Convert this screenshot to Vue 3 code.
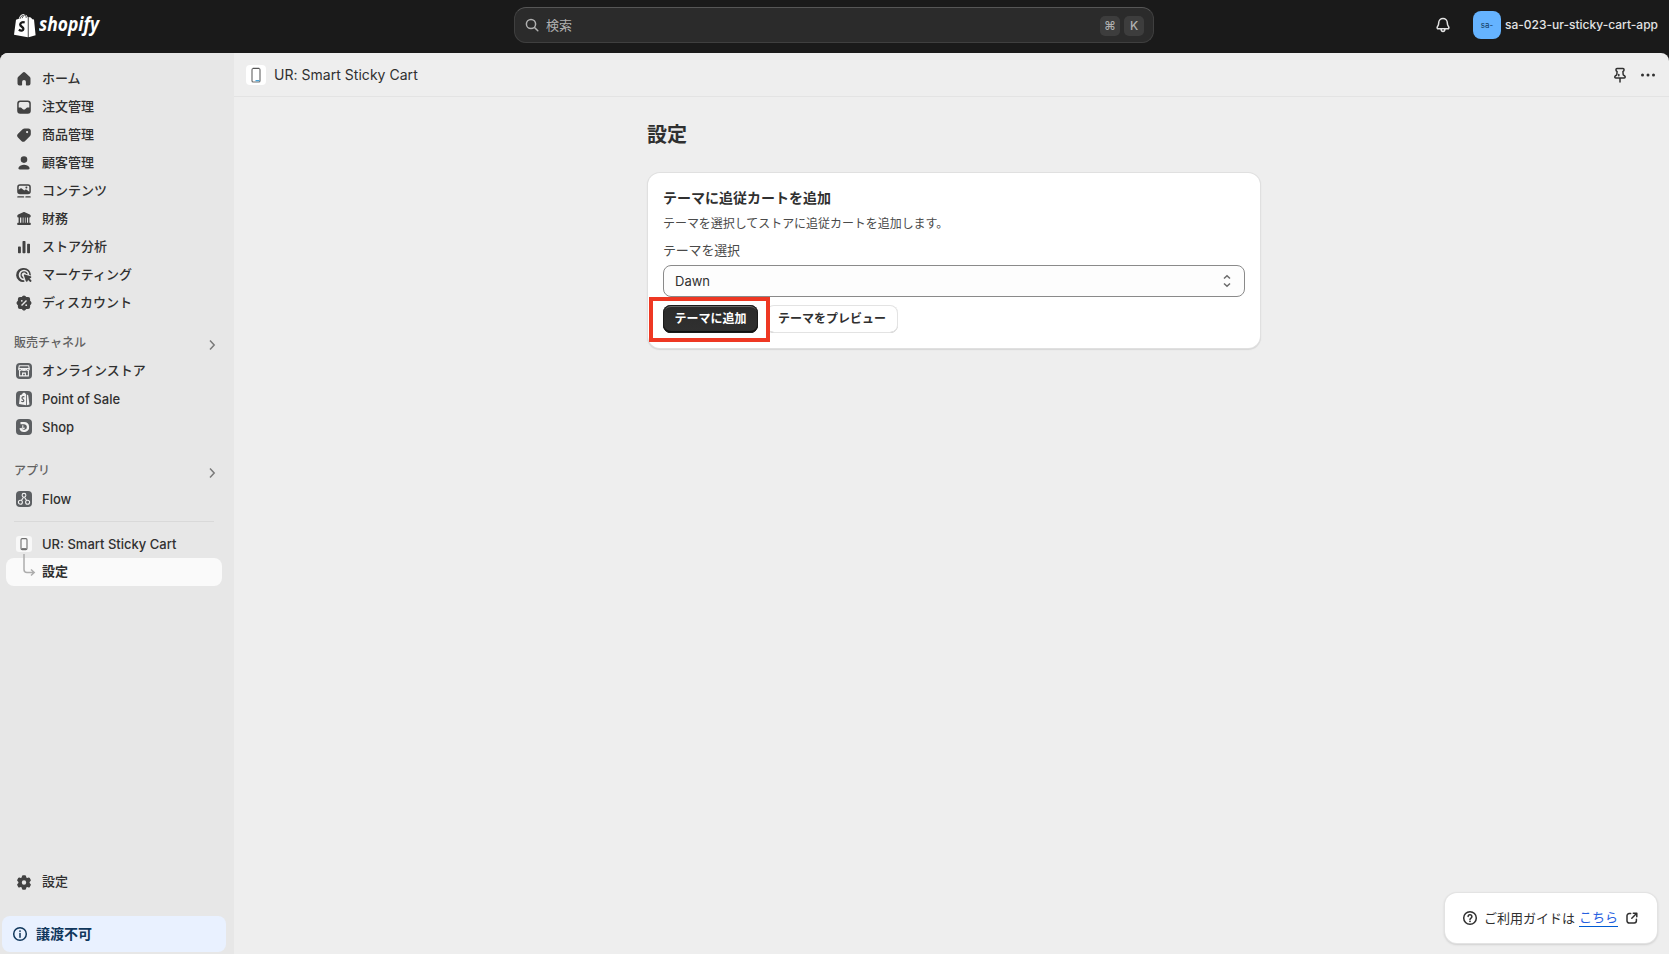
<template>
  <div class="admin">
    <header class="topbar">
      <div class="logo">
        <svg class="logo-bag" viewBox="0 0 22 25" aria-hidden="true">
          <path
            fill="#fff"
            d="M14.6 4.1 16.8 4.4 18.4 6.2 20 6.4 21.6 22.2 14.6 24.2z M13.8 4 13.8 24.3 0 21.8 2 6.7 4.8 5.8C5.4 3.4 7.1 1.1 9.2 1c.7 0 1.2.3 1.5.8C12.2 1.7 13.1 2.6 13.5 4z"
          />
          <path d="M6 5.8C6.6 3.8 8 2.2 9.3 2.2M8.2 5.2c.4-1.5 1.2-2.8 2.5-3.1M11 2c.9.4 1.2 1.5 1.2 2.8" stroke="#1a1a1a" stroke-width=".8" fill="none" />
          <path d="M10.7 9.5C8.4 8.600 6.300 9.600 6.200 11.500c-.1 2.300 3.300 2.300 3.200 4.500-.1 1.900-2.300 2.200-4.600.8" stroke="#1a1a1a" stroke-width="2.300" fill="none" />
        </svg>
        <svg class="logo-word" viewBox="0 0 70 36">
          <text x="0" y="24" textLength="60" lengthAdjust="spacingAndGlyphs">shopify</text>
        </svg>
      </div>

      <div class="search">
        <svg class="icon" viewBox="0 0 20 20">
          <circle cx="9" cy="9" r="4.600" class="line" />
          <path d="m12.500 12.500 3.300 3.300" class="line" />
        </svg>
        <span class="search-text">検索</span>
        <kbd>⌘</kbd>
        <kbd>K</kbd>
      </div>

      <div class="account">
        <svg class="icon bell" viewBox="0 0 20 20">
          <path
            class="line"
            d="M10 3.500a4.300 4.300 0 0 0-4.300 4.300c0 2.400-.6 3.200-1.300 4-.6.800-.2 2 .9 2h9.400c1.100 0 1.500-1.200.9-2-.7-.8-1.300-1.600-1.300-4A4.300 4.300 0 0 0 10 3.500zM8 14.200c.2 1.600 1 2.200 2 2.200s1.800-.6 2-2.200"
          />
        </svg>
        <span class="avatar">sa-</span>
        <span class="store-name">sa-023-ur-sticky-cart-app</span>
      </div>
    </header>

    <div class="frame">
      <nav class="sidebar">
        <a v-for="item in mainNav" :key="item.label" class="nav-item">
          <svg class="icon" viewBox="0 0 20 20">
            <path :d="icons[item.icon]" fill-rule="evenodd" />
          </svg>
          <span class="ja">{{ item.label }}</span>
        </a>

        <div class="nav-heading">
          <span>販売チャネル</span>
          <svg viewBox="0 0 8 12"><path d="m2 1.500 4.200 4.500L2 10.500" /></svg>
        </div>
        <a class="nav-item">
          <svg class="icon" viewBox="0 0 20 20">
            <rect x="2" y="2" width="16" height="16" rx="4" fill="#5c5f62" />
            <path d="M5.300 4.800h9.400l.7 3.400a1.600 1.600 0 0 1-3.100 0 1.600 1.600 0 0 1-3.100 0h1.600a1.600 1.600 0 0 1-3.100 0 1.600 1.600 0 0 1-3.100 0zM5.600 9.800v5.100h8.800V9.800M8.600 15v-2.900h2.800V15" class="tile-line" />
            <path d="M5 7.500h10" class="tile-line" />
          </svg>
          <span class="ja">オンラインストア</span>
        </a>
        <a class="nav-item">
          <svg class="icon" viewBox="0 0 20 20">
            <rect x="2" y="2" width="16" height="16" rx="4" fill="#5c5f62" />
            <path d="m6 6.200 1.900-.6c.5-1.300 1.300-1.900 2.200-1.900.8 0 1.400.6 1.600 1.400l.4.1v11L5 15zM12.900 5.400l1.300.9 1.300 9.100-2.600.8z" fill="#f1f1f1" />
            <path d="M10.400 7.900c-1.500-.5-2.400.1-2.400 1.100 0 1.400 1.900 1.300 1.800 2.700-.1 1.100-1.300 1.300-2.500.6" stroke="#5c5f62" stroke-width="1.200" fill="none" />
          </svg>
          <span>Point of Sale</span>
        </a>
        <a class="nav-item">
          <svg class="icon" viewBox="0 0 20 20">
            <rect x="2" y="2" width="16" height="16" rx="4" fill="#5c5f62" />
            <path d="M6.500 6.100h3.700a3.900 3.900 0 1 1-3.800 5.100" stroke="#f1f1f1" stroke-width="2.200" fill="none" />
            <path d="M8.800 8.200v3.500l2-.7" stroke="#f1f1f1" stroke-width="1.100" fill="none" />
          </svg>
          <span>Shop</span>
        </a>

        <div class="nav-heading apps">
          <span>アプリ</span>
          <svg viewBox="0 0 8 12"><path d="m2 1.500 4.200 4.500L2 10.500" /></svg>
        </div>
        <a class="nav-item">
          <svg class="icon" viewBox="0 0 20 20">
            <rect x="2" y="2" width="16" height="16" rx="4" fill="#5c5f62" />
            <g class="tile-line">
              <circle cx="10" cy="6.300" r="1.900" />
              <circle cx="6.400" cy="13.300" r="2" />
              <circle cx="13.600" cy="13.300" r="2" />
              <path d="M9.500 8.200 7.500 11.400M10.500 8.200l2 3.200" />
            </g>
          </svg>
          <span>Flow</span>
        </a>

        <hr class="nav-divider" />

        <a class="nav-item">
          <svg class="icon" viewBox="0 0 20 20">
            <rect x="2" y="2" width="16" height="16" rx="3" fill="#f8f8f8" />
            <rect x="7" y="4.600" width="6" height="11" rx="1.200" fill="none" stroke="#6f6f6f" stroke-width="1.100" />
            <path d="M7.500 14.600h5" stroke="#6f6f6f" />
          </svg>
          <span>UR: Smart Sticky Cart</span>
        </a>
        <a class="nav-item sub active">
          <svg class="branch" viewBox="0 0 14 26">
            <path d="M2 0v15.500a3 3 0 0 0 3 3h7M9 15.500l3.200 3L9 21.500" />
          </svg>
          <span class="ja">設定</span>
        </a>

        <div class="sidebar-foot">
          <a class="nav-item">
            <svg class="icon" viewBox="0 0 20 20">
              <path :d="icons.gear" fill-rule="evenodd" />
            </svg>
            <span class="ja">設定</span>
          </a>
          <div class="notice">
            <svg class="icon" viewBox="0 0 20 20">
              <circle cx="10" cy="10" r="6.300" class="line" />
              <path d="M10 9.600v3.600" class="line" />
              <circle cx="10" cy="7.100" r=".9" />
            </svg>
            <span class="ja">譲渡不可</span>
          </div>
        </div>
      </nav>

      <main class="main">
        <div class="app-bar">
          <svg class="app-logo" viewBox="0 0 20 20">
            <rect width="20" height="20" rx="4" fill="#fff" />
            <rect x="6" y="3.500" width="8" height="13.500" rx="1.300" fill="none" stroke="#6f6f6f" stroke-width="1.200" />
            <path d="M6.800 3.400h6.400" stroke="#555" stroke-width="1.400" />
            <path d="M9.500 15.600h4" stroke="#4aa3d8" stroke-width="1.200" />
          </svg>
          <span class="app-name">UR: Smart Sticky Cart</span>
          <svg class="icon pin" viewBox="0 0 20 20">
            <path
              class="line"
              d="M7 3.500h6c.6 0 1 .4 1 1v.6c0 .5-.3 1-.8 1.200l-.3.200.3 3.300 1.400 1c.4.300.6.700.6 1.200 0 .5-.4.900-.9.900H5.700a.9.900 0 0 1-.9-.9c0-.5.200-.9.600-1.200l1.400-1 .3-3.300-.3-.2A1.300 1.300 0 0 1 6 5.100v-.6c0-.6.400-1 1-1zM10 13v4M8.800 9.500v1.200"
            />
          </svg>
          <svg class="icon" viewBox="0 0 20 20">
            <circle cx="4.500" cy="10" r="1.500" />
            <circle cx="10" cy="10" r="1.500" />
            <circle cx="15.500" cy="10" r="1.500" />
          </svg>
        </div>

        <div class="page">
          <h1>設定</h1>
          <section class="card">
            <h2>テーマに追従カートを追加</h2>
            <p>テーマを選択してストアに追従カートを追加します。</p>
            <label>テーマを選択</label>
            <div class="select">
              <span>Dawn</span>
              <svg viewBox="0 0 10 14"><path d="M2 4.500 5 1.700l3 2.800M2 9.500l3 2.800 3-2.800" /></svg>
            </div>
            <div class="actions">
              <div class="highlight">
                <button class="btn primary">テーマに追加</button>
              </div>
              <button class="btn">テーマをプレビュー</button>
            </div>
          </section>
        </div>

        <aside class="guide">
          <svg class="icon" viewBox="0 0 20 20">
            <circle cx="10" cy="10" r="6.300" class="line" />
            <path d="M8.100 8.600a1.900 1.900 0 1 1 2.900 1.600c-.6.400-1 .6-1 1.200" class="line" />
            <circle cx="10" cy="13.300" r=".9" />
          </svg>
          <span class="guide-text">ご利用ガイドは</span>
          <a>こちら</a>
          <svg class="icon external" viewBox="0 0 20 20">
            <path d="M8.700 5.600H7.200a2.200 2.200 0 0 0-2.200 2.200v5a2.200 2.200 0 0 0 2.200 2.200h5a2.200 2.200 0 0 0 2.200-2.200v-1.500M11.300 5.200h3.500v3.500M14.500 5.500l-4.700 4.700" class="line" />
          </svg>
        </aside>
      </main>
    </div>
  </div>
</template>

<script setup>
const mainNav = [
  { label: 'ホーム', icon: 'home' },
  { label: '注文管理', icon: 'inbox' },
  { label: '商品管理', icon: 'tag' },
  { label: '顧客管理', icon: 'person' },
  { label: 'コンテンツ', icon: 'content' },
  { label: '財務', icon: 'bank' },
  { label: 'ストア分析', icon: 'chart' },
  { label: 'マーケティング', icon: 'target' },
  { label: 'ディスカウント', icon: 'discount' },
]

const icons = {
  home: 'M8.600 3.700a2 2 0 0 1 2.800 0l4.300 4.100c.5.500.8 1.100.8 1.800v4.900a2 2 0 0 1-2 2h-1.800a.8.800 0 0 1-.8-.8v-2.900a1.900 1.900 0 0 0-3.800 0v2.900a.8.800 0 0 1-.8.800H5.500a2 2 0 0 1-2-2V9.600c0-.7.300-1.300.8-1.800z',
  inbox: 'M6.200 3.500h7.600a3 3 0 0 1 3 3v7.200a3 3 0 0 1-3 3H6.200a3 3 0 0 1-3-3V6.500a3 3 0 0 1 3-3zM6.400 5a1.700 1.700 0 0 0-1.700 1.700v3.800h2c.4 0 .7.200.9.500.5.900 1.400 1.500 2.400 1.500s1.900-.6 2.400-1.500c.2-.3.500-.5.900-.5h2V6.700A1.700 1.700 0 0 0 13.600 5z',
  tag: 'M10.700 3.500h3.600A2.500 2.500 0 0 1 16.800 6v3.200c0 .8-.3 1.500-.9 2l-4.800 4.700a2.600 2.600 0 0 1-3.700 0L4 12.500a2.600 2.600 0 0 1 0-3.700l4.600-4.500a3 3 0 0 1 2.100-.8zM13.100 8.200a1.100 1.100 0 1 0 0-2.200 1.100 1.100 0 0 0 0 2.200z',
  person: 'M10 3.300a3.300 3.300 0 1 1 0 6.600 3.300 3.300 0 0 1 0-6.600zM4.600 14.500c1-1.800 3-2.800 5.400-2.800s4.400 1 5.400 2.800c.5 1-.1 2-1.200 2H5.800c-1.100 0-1.700-1-1.200-2z',
  content: 'M6 3.200h8a2.800 2.800 0 0 1 2.800 2.800v4.500a2.800 2.800 0 0 1-2.800 2.800H6a2.800 2.800 0 0 1-2.800-2.800V6A2.800 2.800 0 0 1 6 3.200zM6 4.700A1.300 1.300 0 0 0 4.700 6v2.700l1.700-1.200c.4-.3.900-.3 1.300 0l2.600 2.100 1-.8c.4-.3.900-.3 1.300 0l2.700 2V6A1.300 1.300 0 0 0 14 4.700zM12.400 5.500a1 1 0 1 1 0 2 1 1 0 0 1 0-2zM3.900 15.200H9.500a.7.700 0 0 1 0 1.400H3.900a.7.700 0 0 1 0-1.400zM12 15.200h4.100a.7.700 0 0 1 0 1.400H12a.7.700 0 0 1 0-1.400z',
  bank: 'M9.200 3.200c.5-.3 1.100-.3 1.600 0l5 2.300c.6.300 1 .9 1 1.500 0 .8-.6 1.500-1.400 1.500v5.300h.7c.4 0 .7.300.7.700v.8c0 .4-.3.700-.7.700H3.900a.7.700 0 0 1-.7-.7v-.8c0-.4.300-.7.700-.7h.7V8.500A1.400 1.400 0 0 1 3.200 7c0-.6.400-1.200 1-1.500zM6 8.500v5.300h1.300V8.500zM8.700 8.500v5.300h.8V8.500zM10.900 8.500v5.300h.7V8.500zM13 8.500v5.300h1.100V8.500z',
  chart: 'M9.200 4h1.600a.7.700 0 0 1 .7.700v10.900a.7.700 0 0 1-.7.700H9.200a.7.700 0 0 1-.7-.7V4.700a.7.700 0 0 1 .7-.7zM4.700 9.500h1.500a.7.700 0 0 1 .7.700v5.400a.7.700 0 0 1-.7.700H4.700a.7.700 0 0 1-.7-.7v-5.400a.7.700 0 0 1 .7-.7zM13.800 6.800h1.500a.7.700 0 0 1 .7.700v8.100a.7.700 0 0 1-.7.700h-1.500a.7.700 0 0 1-.7-.7V7.500a.7.700 0 0 1 .7-.7z',
  target: 'M10 3a7 7 0 0 1 6.900 6.900l-.1.600-1.500-.4A5.300 5.300 0 1 0 10.100 15.300l.4 1.500A7 7 0 1 1 10 3zM10 6.200a3.800 3.800 0 0 1 3.700 3.100l-1.600-.3a2.300 2.300 0 1 0-3 3l.4 1.700A3.800 3.800 0 0 1 10 6.200zM10.700 9.600l5.900 1.600c.9.200 1 1.300.2 1.700l-1.300.6 1.800 1.800a1 1 0 0 1-1.400 1.400l-1.800-1.800-.6 1.300c-.4.800-1.500.7-1.700-.2l-1.900-5.600c-.2-.5.300-1 .8-.8z',
  discount: 'M8.600 3.100a2 2 0 0 1 2.800 0l.8.800h1.900a2 2 0 0 1 2 2v1.900l.8.800a2 2 0 0 1 0 2.800l-.8.800v1.900a2 2 0 0 1-2 2h-1.900l-.8.800a2 2 0 0 1-2.800 0l-.8-.8H5.900a2 2 0 0 1-2-2v-1.900l-.8-.8a2 2 0 0 1 0-2.800l.8-.8V5.900a2 2 0 0 1 2-2h1.900zM12 7l1 1-5 5-1-1zM7.800 8.700a.9.900 0 1 0 0-1.800.9.900 0 0 0 0 1.800zM12.200 13.100a.9.900 0 1 0 0-1.800.9.900 0 0 0 0 1.800z',
  gear: 'M9 3.300h2c.5 0 .9.300 1 .8l.3 1.300 1 .6 1.300-.4c.5-.1 1 .1 1.200.5l.9 1.600c.3.400.2 1-.2 1.300l-.9.900v1.200l.9.900c.4.300.5.900.2 1.300l-.9 1.600c-.2.400-.7.600-1.200.5l-1.300-.4-1 .6-.3 1.300c-.1.500-.5.800-1 .8H9c-.5 0-.9-.3-1-.8l-.3-1.300-1-.6-1.300.4c-.5.100-1-.1-1.200-.5l-.9-1.600c-.3-.4-.2-1 .2-1.300l.9-.9V9.900L3.500 9c-.4-.3-.5-.9-.2-1.300l.9-1.600c.2-.4.7-.6 1.200-.5l1.300.4 1-.6L8 4.100c.1-.5.500-.8 1-.8zM10 12.700a2.200 2.200 0 1 0 0-4.400 2.200 2.200 0 0 0 0 4.400z',
}
</script>

<style>
body {
  background: #1a1a1a;
}
</style>

<style scoped>
* {
  box-sizing: border-box;
}

.admin {
  display: flex;
  flex-direction: column;
  height: 100vh;
  overflow: hidden;
  background: #1a1a1a;
  color: #303030;
  font-family: Inter, "Noto Sans CJK JP", sans-serif;
  font-size: 13px;
  line-height: 20px;
}

.icon {
  flex: none;
  width: 20px;
  height: 20px;
  fill: currentColor;
}

.line {
  fill: none;
  stroke: currentColor;
  stroke-width: 1.5;
  stroke-linecap: round;
  stroke-linejoin: round;
}

.tile-line {
  fill: none;
  stroke: #f1f1f1;
  stroke-width: 1.1;
}

/* Japanese glyphs sit slightly low in the line box */
.ja {
  padding-bottom: 1px;
  line-height: 19px;
}

.topbar {
  display: grid;
  grid-template-columns: 514px 640px 1fr;
  flex: none;
  height: 53px;
  padding-bottom: 3px;
  align-items: center;
}

.logo {
  display: flex;
  align-items: center;
  gap: 3px;
  padding-left: 14px;
}

.logo-bag {
  width: 22px;
  height: 25px;
}

.logo-word {
  width: 70px;
  height: 36px;
  fill: #fff;
  font: italic 700 20px/26px "Open Sans", sans-serif;
}

.search {
  display: flex;
  align-items: center;
  height: 36px;
  padding: 0 9px 0 7px;
  border: 1px solid #3f3f3f;
  border-top-color: #565656;
  border-radius: 12px;
  background: #2b2b2b;
  color: #b0b0b0;
}

.search-text {
  flex: 1;
  margin-left: 4px;
}

kbd {
  width: 20px;
  height: 20px;
  margin: 1px 0 0 4px;
  border-radius: 5px;
  background: #3d3d3d;
  font: 500 12px/20px Inter, sans-serif;
  text-align: center;
}

.account {
  display: flex;
  align-items: center;
  justify-content: flex-end;
  padding-right: 11px;
  color: #e3e3e3;
}

.bell {
  margin-right: 20px;
}

.avatar {
  width: 28px;
  height: 28px;
  margin-right: 4px;
  border-radius: 8px;
  background: #65b3ff;
  color: #103b63;
  font-size: 8px;
  line-height: 28px;
  text-align: center;
}

.store-name {
  font-size: 12px;
  font-weight: 500;
}

.frame {
  display: flex;
  flex: 1;
  min-height: 0;
  overflow: hidden;
  border-radius: 8px 8px 0 0;
  background: #eee;
}

.sidebar {
  display: flex;
  flex: none;
  flex-direction: column;
  width: 234px;
  padding: 12px 12px 2px 6px;
  background: #e7e7e7;
}

.nav-item {
  display: flex;
  flex: none;
  align-items: center;
  gap: 8px;
  height: 28px;
  padding-left: 8px;
  border-radius: 8px;
  font-weight: 500;
}

.nav-item .icon {
  color: #424242;
}

.nav-heading {
  display: flex;
  flex: none;
  align-items: center;
  justify-content: space-between;
  height: 28px;
  margin-top: 12px;
  padding: 0 6px 0 8px;
  color: #616161;
  font-size: 12px;
  font-weight: 500;
}

.nav-heading.apps {
  margin-top: 16px;
}

.nav-heading svg {
  width: 8px;
  height: 12px;
  margin-top: 3px;
  fill: none;
  stroke: #7a7a7a;
  stroke-width: 1.5;
}

.nav-divider {
  flex: none;
  width: 200px;
  height: 1px;
  margin: 8px 8px;
  border: 0;
  background: #d9d9d9;
}

.active {
  background: #fafafa;
}

.sub {
  gap: 6px;
  padding-left: 16px;
  font-weight: 600;
}

.branch {
  width: 14px;
  height: 26px;
  margin-top: -10px;
  fill: none;
  stroke: #adadad;
  stroke-width: 1.5;
}

.sidebar-foot {
  margin-top: auto;
}

.notice {
  display: flex;
  align-items: center;
  gap: 6px;
  height: 36px;
  margin: 20px -4px 0;
  padding-left: 8px;
  border-radius: 8px;
  background: #e9f1ff;
  color: #10375c;
  font-size: 14px;
  font-weight: 600;
}

.main {
  position: relative;
  flex: 1;
}

.app-bar {
  display: flex;
  align-items: center;
  height: 44px;
  padding: 0 11px 0 12px;
  border-bottom: 1px solid #e3e3e3;
}

.app-logo {
  width: 20px;
  height: 20px;
}

.app-name {
  margin-left: 8px;
  font-size: 14px;
  letter-spacing: 0.03px;
}

.pin {
  margin: 0 8px 0 auto;
}

.page {
  width: 612px;
  margin: 24px 0 0 414px;
}

h1 {
  margin: 0 0 24px -1px;
  font-size: 20px;
  font-weight: 600;
  line-height: 28px;
}

.card {
  display: flex;
  flex-direction: column;
  height: 175px;
  padding: 15px 15px 16px;
  border-radius: 12px;
  background: #fff;
  box-shadow: 0 0 0 1px #e0e0e0, 0 1px 1px 1px #d6d6d6;
}

h2 {
  margin: 0;
  font-size: 14px;
  font-weight: 600;
}

.card p {
  margin: 6px 0 5px;
  color: #4a4a4a;
  font-size: 12px;
  letter-spacing: -0.05px;
}

.card label {
  margin: 1px 0 5px;
  color: #4a4a4a;
  letter-spacing: -0.2px;
}

.select {
  display: flex;
  flex: none;
  align-items: center;
  justify-content: space-between;
  height: 32px;
  padding: 0 12px 0 11px;
  border: 1px solid #8a8a8a;
  border-radius: 8px;
  background: #fdfdfd;
}

.select svg {
  width: 10px;
  height: 14px;
  fill: none;
  stroke: #6b6b6b;
  stroke-width: 1.5;
}

.actions {
  display: flex;
  gap: 8px;
  margin-top: 8px;
}

.btn {
  height: 28px;
  padding: 0 12px;
  border: 0;
  border-radius: 8px;
  background: #fff;
  box-shadow: inset 0 0 0 1px #e3e3e3, inset 0 -1px 0 #b5b5b5;
  color: #303030;
  font: 600 12px/16px Inter, "Noto Sans CJK JP", sans-serif;
}

.btn.primary {
  width: 95px;
  padding: 0 11px;
  background: linear-gradient(#2b2b2b, #303030);
  box-shadow: inset 0 0 0 1px #1a1a1a, inset 0 -2px 0 #111, inset 0 2px 0 #6a6a6a;
  color: #fff;
}

.highlight {
  position: relative;
}

.highlight::after {
  position: absolute;
  inset: -8px -12px -9px -14px;
  border: 4px solid #ee3823;
  content: "";
}

.guide {
  position: absolute;
  right: 12px;
  bottom: 11px;
  display: flex;
  align-items: center;
  width: 212px;
  height: 50px;
  padding-left: 15px;
  border-radius: 12px;
  background: #fff;
  box-shadow: 0 0 0 1px #e3e3e3, 0 1px 2px 1px #d0d0d0;
}

.guide-text {
  margin: 0 4px;
}

.guide a {
  border-bottom: 1px solid #005bd3;
  color: #2660e0;
  line-height: 17px;
}

.external {
  margin-left: 4px;
}
</style>
